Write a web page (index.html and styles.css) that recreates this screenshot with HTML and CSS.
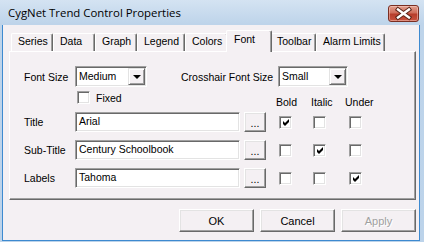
FILE: index.html
```html
<!DOCTYPE html>
<html>
<head>
<meta charset="utf-8">
<link rel="stylesheet" href="styles.css">
</head>
<body>
<div class="window">
  <div class="titlebar">
    <span class="title">CygNet Trend Control Properties</span>
    <span class="close">
      <svg width="29" height="15" viewBox="0 0 29 15">
        <path d="M9 3.5 L20 11.5 M20 3.5 L9 11.5" stroke="#5a2418" stroke-width="4.4" stroke-linecap="square" fill="none"/>
        <path d="M9 3.5 L20 11.5 M20 3.5 L9 11.5" stroke="#ffffff" stroke-width="2.4" stroke-linecap="square" fill="none"/>
      </svg>
    </span>
  </div>
  <div class="client">
    <div class="tabs">
      <div class="tab t-series">Series</div>
      <div class="tab t-data">Data</div>
      <div class="tab t-graph">Graph</div>
      <div class="tab t-legend">Legend</div>
      <div class="tab t-colors">Colors</div>
      <div class="tab t-font selected">Font</div>
      <div class="tab t-toolbar">Toolbar</div>
      <div class="tab t-alarm">Alarm Limits</div>
    </div>
    <div class="panel">
      <div class="row-sizes">
        <span class="lbl">Font Size</span>
        <div class="combo combo-size">
          <span class="combo-text">Medium</span>
          <span class="combo-btn"></span>
        </div>
        <span class="lbl lbl-cross">Crosshair Font Size</span>
        <div class="combo combo-cross">
          <span class="combo-text">Small</span>
          <span class="combo-btn"></span>
        </div>
      </div>
      <div class="row-heads">
        <div class="fixed-group">
          <span class="check"></span>
          <span class="fixed-lbl">Fixed</span>
        </div>
        <div class="heads">
          <span class="cell">Bold</span>
          <span class="cell">Italic</span>
          <span class="cell">Under</span>
        </div>
      </div>
      <div class="font-row">
        <span class="lbl">Title</span>
        <div class="field">Arial</div>
        <span class="btn btn-dots">...</span>
        <div class="checks">
          <span class="cell"><span class="check on"><svg width="9" height="9" viewBox="0 0 9 9"><path d="M1 3 L3 5 L7 1 L7 4 L3 8 L1 6 Z" fill="#000"/></svg></span></span>
          <span class="cell"><span class="check"></span></span>
          <span class="cell"><span class="check"></span></span>
        </div>
      </div>
      <div class="font-row">
        <span class="lbl">Sub-Title</span>
        <div class="field">Century Schoolbook</div>
        <span class="btn btn-dots">...</span>
        <div class="checks">
          <span class="cell"><span class="check"></span></span>
          <span class="cell"><span class="check on"><svg width="9" height="9" viewBox="0 0 9 9"><path d="M1 3 L3 5 L7 1 L7 4 L3 8 L1 6 Z" fill="#000"/></svg></span></span>
          <span class="cell"><span class="check"></span></span>
        </div>
      </div>
      <div class="font-row">
        <span class="lbl">Labels</span>
        <div class="field">Tahoma</div>
        <span class="btn btn-dots">...</span>
        <div class="checks">
          <span class="cell"><span class="check"></span></span>
          <span class="cell"><span class="check"></span></span>
          <span class="cell"><span class="check on"><svg width="9" height="9" viewBox="0 0 9 9"><path d="M1 3 L3 5 L7 1 L7 4 L3 8 L1 6 Z" fill="#000"/></svg></span></span>
        </div>
      </div>
    </div>
    <div class="actions">
      <span class="btn btn-action">OK</span>
      <span class="btn btn-action">Cancel</span>
      <span class="btn btn-action disabled">Apply</span>
    </div>
  </div>
</div>
</body>
</html>
```
FILE: styles.css
```css
* { box-sizing: border-box; margin: 0; padding: 0; }
body {
  width: 424px; height: 242px; overflow: hidden;
  font-family: "Liberation Sans", Arial, sans-serif;
  font-size: 10.5px; color: #000; background: #fff;
}
.window {
  width: 424px; height: 242px;
  display: flex; flex-direction: column;
  background: linear-gradient(#d4e3f2, #bed4ea 24px, #bcd3ea);
  padding: 0 4px 1px 2px;
}
.titlebar {
  height: 25px; flex: none;
  display: flex; justify-content: space-between; align-items: flex-start;
  padding: 0 1px 0 6px;
}
.title {
  font-family: "Open Sans", "Noto Sans", sans-serif;
  font-size: 11.4px; line-height: 16px; margin-top: 5px; color: #000;
}
.close {
  width: 31px; height: 17px; margin-top: 5px;
  border: 1px solid #7a2e22; border-radius: 3px;
  background: linear-gradient(#e2a090, #cf6e5b 45%, #b73d2b 55%, #c9533f);
  box-shadow: inset 0 0 0 1px rgba(255,220,210,0.45);
  display: flex; align-items: center; justify-content: center;
}
.client {
  flex: 1;
  background: #f4f0f3;
  border: 1px solid #3d8ad0; border-top: none;
  display: flex; flex-direction: column;
  padding: 0 3px 0 6px;
}
.tabs {
  height: 26px; flex: none;
  padding: 6px 0 0 2px;
  display: flex; align-items: flex-end;
  position: relative; z-index: 1;
}
.tab {
  height: 18px; line-height: 15px;
  padding-left: 6px;
  border: 1px solid #fff; border-bottom: none; border-right-color: #696969;
  border-radius: 2px 2px 0 0;
  box-shadow: inset -1px 0 #a0a0a0;
  background: #f4f0f3;
}
.t-series { width: 42px; }
.t-data { width: 42px; }
.t-graph { width: 42px; }
.t-legend { width: 48px; }
.t-colors { width: 43px; }
.t-font { width: 42px; }
.t-toolbar { width: 46px; }
.t-alarm { width: 69px; }
.tab.selected {
  width: 46px; height: 22px; line-height: 16px;
  margin: 0 -2px -1px -2px; padding-left: 7px;
  position: relative; z-index: 2;
}
.panel {
  height: 149px; flex: none;
  border: 1px solid; border-color: #fff #696969 #696969 #fff;
  box-shadow: inset -1px -1px #a0a0a0;
  padding: 14px 0 0 14px;
  display: flex; flex-direction: column;
}
.lbl { width: 51px; flex: none; }
.row-sizes { display: flex; align-items: center; height: 21px; }
.lbl-cross { margin-left: 34px; width: 97px; }
.combo {
  height: 21px; display: flex; padding: 1px;
  background: #fff;
  border: 1px solid; border-color: #a0a0a0 #fff #fff #a0a0a0;
  box-shadow: inset 1px 1px #696969, inset -1px -1px #e3e3e3;
}
.combo-size { width: 72px; }
.combo-cross { width: 70px; }
.combo-text { flex: 1; line-height: 17px; padding-left: 2px; }
.combo-btn {
  width: 17px; height: 17px; flex: none;
  background: #f4f0f3;
  border: 1px solid; border-color: #e3e3e3 #696969 #696969 #e3e3e3;
  box-shadow: inset 1px 1px #fff, inset -1px -1px #a0a0a0;
  display: flex; align-items: center; justify-content: center;
}
.combo-btn::after {
  content: ""; width: 0; height: 0;
  border-left: 4px solid transparent; border-right: 4px solid transparent;
  border-top: 4px solid #000;
  margin-top: 1px;
}
.row-heads { display: flex; margin-top: 4px; height: 18px; }
.fixed-group { width: 199px; margin-left: 53px; display: flex; align-items: center; height: 13px; }
.fixed-lbl { margin-left: 6px; }
.heads { display: flex; padding-top: 5px; line-height: 13px; }
.cell { display: flex; flex: none; }
.cell:nth-child(1) { width: 35px; }
.cell:nth-child(2) { width: 34px; }
.cell:nth-child(3) { width: 40px; }
.check {
  width: 13px; height: 13px; flex: none;
  background: #fff;
  border: 1px solid; border-color: #a0a0a0 #fff #fff #a0a0a0;
  box-shadow: inset 1px 1px #696969, inset -1px -1px #e3e3e3;
  display: flex; align-items: center; justify-content: center;
}
.check svg { margin: 1px 0 0 1px; }
.checks { display: flex; margin-left: 10px; }
.checks .cell:nth-child(1) { padding-left: 3px; }
.checks .cell:nth-child(2) { padding-left: 2px; }
.checks .cell:nth-child(3) { padding-left: 4px; }
.font-row { display: flex; align-items: center; height: 20px; margin-top: 3px; }
.font-row + .font-row { margin-top: 8px; }
.field {
  width: 165px; height: 20px; flex: none;
  background: #fff; line-height: 16px; padding-left: 3px;
  border: 1px solid; border-color: #a0a0a0 #fff #fff #a0a0a0;
  box-shadow: inset 1px 1px #696969, inset -1px -1px #e3e3e3;
}
.btn {
  background: #f4f0f3;
  border: 1px solid; border-color: #fff #696969 #696969 #fff;
  box-shadow: inset -1px -1px #a0a0a0, inset 1px 1px #e3e3e3;
  display: flex; align-items: center; justify-content: center;
  flex: none;
}
.btn-dots { width: 22px; height: 20px; margin-left: 4px; align-items: flex-end; padding-bottom: 3px; line-height: 10px; }
.actions { display: flex; justify-content: flex-end; gap: 6px; margin-top: 9px; }
.btn-action { width: 75px; height: 23px; font-size: 11px; }
.btn-action.disabled { color: #a0a0a0; text-shadow: 1px 1px #fff; }
```
